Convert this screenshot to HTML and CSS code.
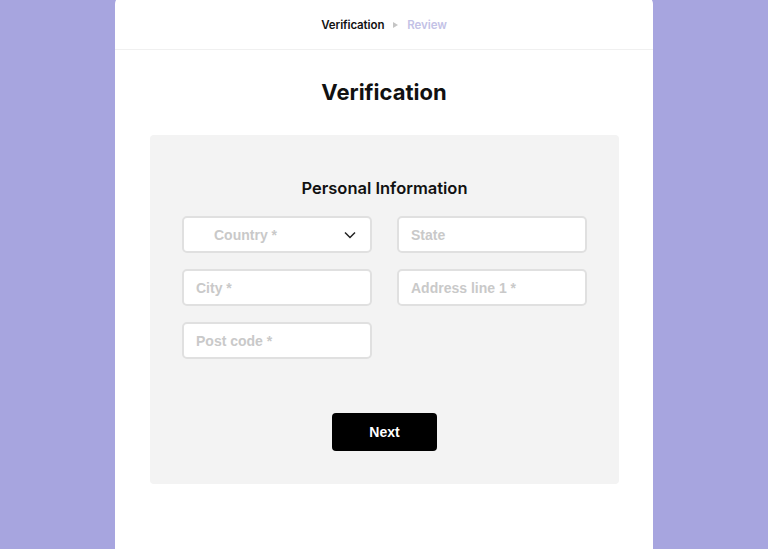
FILE: index.html
```html
<!DOCTYPE html>
<html lang="en">
<head>
  <meta charset="UTF-8" />
  <meta name="viewport" content="width=device-width, initial-scale=1" />
  <title>Verification</title>
  <link rel="stylesheet" href="styles.css">
</head>
<body>
  <div class="page-card">
    <div class="steps">
      <span class="step active">Verification</span>
      <span class="step-arrow"></span>
      <span class="step">Review</span>
    </div>

    <h1>Verification</h1>

    <div class="form-panel">
      <h2>Personal Information</h2>
      <div class="fields">
        <div class="field select">
          <span class="placeholder">Country *</span>
          <svg class="chevron" width="12" height="8" viewBox="0 0 12 8">
            <path d="M1 1.5 L6 6.5 L11 1.5" fill="none" stroke="#222" stroke-width="1.5" />
          </svg>
        </div>
        <div class="field"><span class="placeholder">State</span></div>
        <div class="field"><span class="placeholder">City *</span></div>
        <div class="field"><span class="placeholder">Address line 1 *</span></div>
        <div class="field"><span class="placeholder">Post code *</span></div>
      </div>
      <div class="actions">
        <button class="next-btn">Next</button>
      </div>
    </div>
  </div>
</body>
</html>
```

FILE: styles.css
```css
:root {
  --bg: #a7a5df;
  --panel: #f3f3f3;
  --border: #e0e0e0;
  --muted: #c9c9c9;
  --step-muted: #c3c2e6;
}

body {
  margin: 0;
  background-color: var(--bg);
  font-family: Inter, "Liberation Sans", sans-serif;
  color: #111;
  height: 549px;
  overflow: hidden;
}

.page-card {
  width: 538px;
  margin: -4px auto 0;
  min-height: 580px;
  background: #fff;
  border-radius: 8px;
}

.steps {
  height: 54px;
  box-sizing: border-box;
  padding-top: 4px;
  border-bottom: 1px solid #f0f0f0;
  display: flex;
  align-items: center;
  justify-content: center;
  gap: 9px;
  font-size: 11.5px;
  font-weight: 600;
  letter-spacing: -0.1px;
}

.step {
  color: var(--step-muted);
}

.step.active {
  color: #111;
}

.step-arrow {
  width: 0;
  height: 0;
  border-left: 5px solid #c5c5c5;
  border-top: 3px solid transparent;
  border-bottom: 3px solid transparent;
}

h1 {
  margin: 28px 0 0;
  text-align: center;
  font-size: 22px;
  font-weight: 700;
  line-height: 29px;
}

.form-panel {
  margin: 28px 34px 0 35px;
  background: var(--panel);
  border-radius: 4px;
  padding: 43px 32px 32px;
  height: 349px;
  box-sizing: border-box;
}

h2 {
  margin: 0;
  text-align: center;
  font-size: 16.5px;
  font-weight: 600;
  line-height: 20px;
}

.fields {
  margin-top: 18px;
  display: grid;
  grid-template-columns: 1fr 1fr;
  column-gap: 25px;
  row-gap: 16px;
}

.field {
  height: 37px;
  box-sizing: border-box;
  background: #fff;
  border: 2px solid var(--border);
  border-radius: 5px;
  display: flex;
  align-items: center;
  padding: 0 12px;
  font-family: "Liberation Sans", Arial, sans-serif;
  font-weight: 700;
  font-size: 14px;
}

.field.select {
  padding-left: 30px;
  justify-content: space-between;
  padding-right: 14px;
}

.placeholder {
  color: var(--muted);
}

.actions {
  margin-top: 54px;
  display: flex;
  justify-content: center;
}

.next-btn {
  width: 105px;
  height: 38px;
  border: none;
  border-radius: 4px;
  background: #000;
  color: #fff;
  font-family: "Liberation Sans", Arial, sans-serif;
  font-weight: 700;
  font-size: 14px;
  cursor: pointer;
}
```
